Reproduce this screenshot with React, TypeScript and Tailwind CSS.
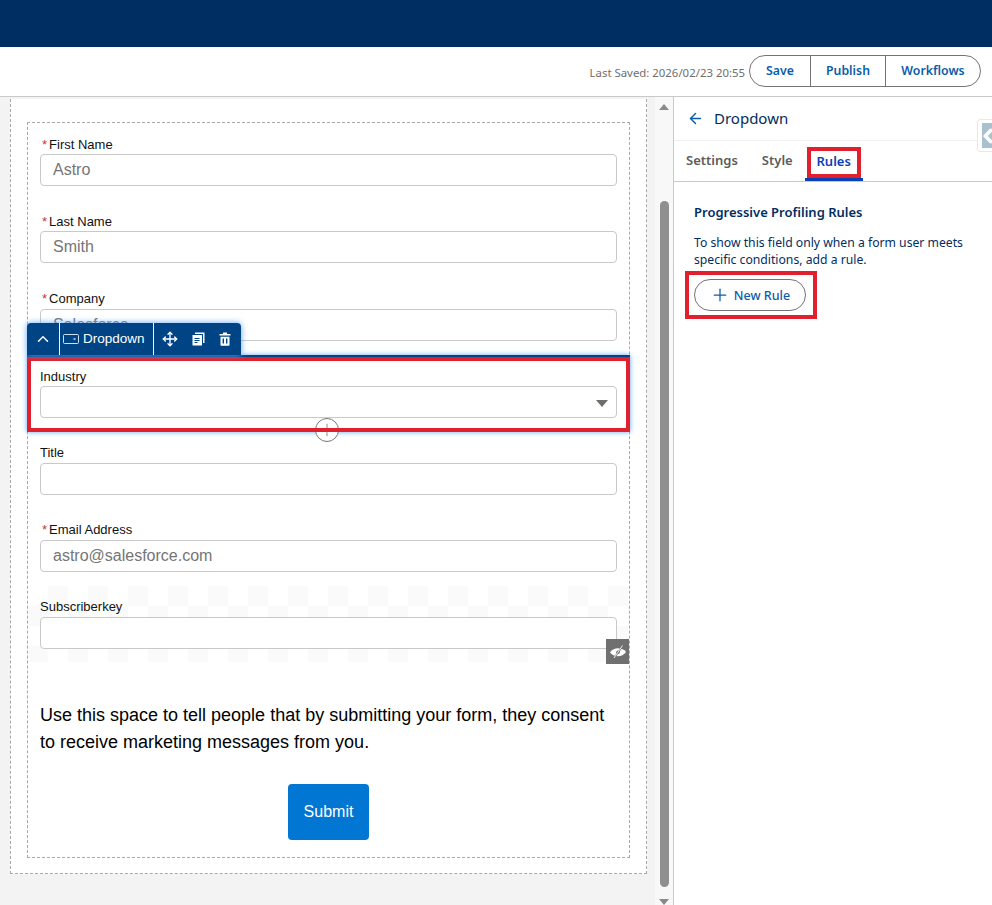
import { ArrowLeft, ChevronLeft, ChevronUp, Move, Plus } from "lucide-react"

const FORM_FONT = "font-['Liberation_Sans',Arial,sans-serif]"

function Field({ label, value, required }: { label: string; value?: string; required?: boolean }) {
  return (
    <div className="h-[77.17px] px-[12px]">
      <div className="flex h-[20px] items-center text-[13px] text-[#111]">
        {required && <span className="ml-[2px] mr-[2px] text-[#c23934]">*</span>}
        {label}
      </div>
      <div className="flex h-[32px] items-center rounded-[4px] border border-[#c9c9c9] bg-white pl-[12px] text-[16px] text-[#757575]">
        {value}
      </div>
    </div>
  )
}

function CopyIcon() {
  return (
    <svg width="13" height="14" viewBox="0 0 13 14">
      <path d="M3 2V0.5h9.5V11H11V2z" fill="white" />
      <path d="M0.5 3H10v10.5H0.5z" fill="white" />
      <path d="M2.5 6.5h5M2.5 8.5h5M2.5 10.5h3" stroke="#014486" strokeWidth="1" />
    </svg>
  )
}

function TrashIcon() {
  return (
    <svg width="12" height="14" viewBox="0 0 12 14">
      <path d="M4 2V0.5h4V2h3.5v1.6H0.5V2z" fill="white" />
      <path d="M1.5 4.8h9V13a.8.8 0 0 1-.8.8H2.3a.8.8 0 0 1-.8-.8z" fill="white" />
      <path d="M4.3 6.5v5M7.700 6.5v5" stroke="#014486" strokeWidth="1.4" />
    </svg>
  )
}

function HiddenEyeIcon() {
  return (
    <svg width="18" height="16" viewBox="0 0 18 16">
      <path d="M1 8.500C4.500 3 13.500 3 17 8c-3.500 5.500-12.500 5.500-16 .5z" fill="white" />
      <circle cx="9" cy="8.200" r="1.800" fill="#707070" />
      <path d="M13.500 2 4.500 15" stroke="#707070" strokeWidth="1.800" />
      <path d="M13.500 1.500 5 14" stroke="white" strokeWidth="0.900" />
    </svg>
  )
}

function FormCanvas() {
  return (
    <div className="flex min-w-0 flex-1 flex-col items-stretch pl-[10px] pt-[2px]">
      <div className="h-[775px] w-[637px] border-x border-b border-dashed border-[#a8a8a8] bg-white px-[16px] pt-[23px]">
        <div className={`h-[736px] border border-dashed border-[#a8a8a8] pt-[11.25px] ${FORM_FONT}`}>
          <Field label="First Name" value="Astro" required />
          <Field label="Last Name" value="Smith" required />
          <Field label="Company" value="Salesforce" required />

          {/* selected field, toolbar and frame sit on top of its neighbours */}
          <div className="relative h-[77.17px] px-[12px]">
            <div className="absolute -top-[43px] -left-px z-20 flex h-[32px] w-[214px] items-center rounded-t-[4px] bg-[#014486] text-white shadow-[0_0_6px_#60a5fa]">
              <div className="flex h-full w-[33px] items-center justify-center border-r border-white">
                <ChevronUp size={18} strokeWidth={2} />
              </div>
              <div className="flex h-full w-[94px] items-center gap-[4px] border-r border-white pl-[3px] pt-[1px] text-[13.5px]">
                <svg width="16" height="12" viewBox="0 0 16 12" fill="none" stroke="#cfe0f2" strokeWidth="1">
                  <rect x="0.5" y="1.5" width="15" height="9" rx="1" />
                  <path d="M10.500 6h2" strokeWidth="1.5" />
                </svg>
                Dropdown
              </div>
              <div className="ml-[8px] flex items-center gap-[14px]">
                <Move size={16} strokeWidth={2} />
                <CopyIcon />
                <TrashIcon />
              </div>
            </div>
            <div className="absolute -top-[11px] -left-px z-10 h-[77px] w-[603px] border-t-2 border-[#014486] shadow-[0_0_5px_#60a5fa]" />
            <div className="flex h-[20px] items-center pt-[2px] text-[13px] text-[#111]">Industry</div>
            <div className="relative flex h-[32px] items-center rounded-[4px] border border-[#c9c9c9] bg-white">
              <div className="absolute right-[8px] top-[13px] h-0 w-0 border-x-[6px] border-t-[7px] border-x-transparent border-t-[#706e6b]" />
            </div>
            <div className="absolute left-[287px] top-[52px] z-10 flex h-[24px] w-[24px] items-center justify-center rounded-full border border-[#777] bg-white text-[#777]">
              <Plus size={20} strokeWidth={1} />
            </div>
            <div className="absolute -top-[9px] -left-px z-10 h-[75px] w-[603px] border-4 border-[#e0202c]" />
          </div>

          <Field label="Title" />
          <Field label="Email Address" value="astro@salesforce.com" required />

          {/* hidden field: checker backdrop and eye badge */}
          <div className="relative h-[77.17px] px-[12px]">
            <div className="absolute -top-[11px] left-0 h-[76px] w-[601px] bg-[conic-gradient(#fafafa_25%,#ffffff_0_50%,#fafafa_0_75%,#ffffff_0)] bg-[length:40px_40px]" />
            <div className="relative flex h-[20px] items-center text-[13px] text-[#111]">Subscriberkey</div>
            <div className="relative h-[32px] rounded-[4px] border border-[#c9c9c9] bg-white" />
            <div className="absolute right-0 top-[42px] flex h-[25px] w-[23px] items-center justify-center bg-[#707070]">
              <HiddenEyeIcon />
            </div>
          </div>

          <p className="mt-[27.75px] px-[12px] text-[18px] leading-[27px] text-black">
            Use this space to tell people that by submitting your form, they consent to receive marketing messages from you.
          </p>
          <div className="mt-[28px] flex justify-center">
            <button className="h-[56px] w-[81px] rounded-[4px] bg-[#0176d3] text-[16px] text-white">Submit</button>
          </div>
        </div>
      </div>
    </div>
  )
}

function Scrollbar() {
  return (
    <div className="flex w-[18px] flex-col items-center bg-[#f8f8f8] pt-[7px]">
      <div className="h-0 w-0 border-x-[5px] border-b-[6px] border-x-transparent border-b-[#8a8a8a]" />
      <div className="mt-[91px] h-[686px] w-[9px] rounded-full bg-[#8f8f8f]" />
      <div className="mt-[12px] h-0 w-0 border-x-[5px] border-t-[6px] border-x-transparent border-t-[#8a8a8a]" />
    </div>
  )
}

function SidePanel() {
  return (
    <aside className="relative flex-1 border-l border-[#c9c9c9] bg-white text-[#032d60]">
      <div className="flex h-[44px] items-center gap-[10px] border-b border-[#f0f0f0] pl-[13px] text-[15px]">
        <ArrowLeft size={17} className="text-[#0b5cab]" strokeWidth={2} />
        Dropdown
      </div>
      <div className="absolute right-0 top-[22px] flex h-[33px] w-[15px] items-center rounded-l-[4px] border border-r-0 border-[#e8e8e8] bg-white pl-[4px]">
        <div className="flex h-[25px] w-[11px] items-center overflow-hidden bg-[#a9c0cf] text-white">
          <ChevronLeft size={22} strokeWidth={4} className="-ml-[5px] shrink-0" />
        </div>
      </div>
      <div className="flex h-[41px] items-stretch border-b border-[#c9c9c9] pl-[12px] text-[13px] font-semibold text-[#5c5c5c]">
        <span className="mr-[24px] flex items-center">Settings</span>
        <span className="mr-[12px] flex items-center">Style</span>
        <span className="relative flex w-[58px] items-center justify-center border-b-[3px] border-[#0b3fb8] pt-[5px] text-[#0b3fb8]">
          Rules
          <span className="absolute left-[2px] top-[6px] h-[31px] w-[54px] border-4 border-[#e0202c]" />
        </span>
      </div>
      <div className="px-[20px] pt-[21px]">
        <h2 className="text-[13px] font-semibold leading-[18px]">Progressive Profiling Rules</h2>
        <p className="mt-[13px] text-[12.2px] leading-[17px]">
          To show this field only when a form user meets specific conditions, add a rule.
        </p>
        <div className="relative mt-[11px]">
          <button className="flex h-[32px] w-[112px] items-center justify-center gap-[4px] rounded-full border border-[#747474] pt-[2px] text-[12.5px] font-medium text-[#0b5cab]">
            <Plus size={20} strokeWidth={1.5} className="-mt-[2px]" />
            New Rule
          </button>
          <span className="absolute -left-[9px] -top-[8px] h-[48px] w-[132px] border-4 border-[#e0202c]" />
        </div>
      </div>
    </aside>
  )
}

export default function App() {
  return (
    <div className="flex h-[905px] w-[992px] flex-col overflow-hidden bg-white font-['Noto_Sans',sans-serif]">
      <header className="h-[47px] bg-[#002d62]" />
      <div className="flex h-[50px] items-start justify-end border-b border-[#c9c9c9] pr-[11px] pt-[8px]">
        <span className="mr-[4px] mt-[10px] text-[11.4px] leading-[15px] text-[#706e6b]">Last Saved: 2026/02/23 20:55</span>
        <div className="flex h-[32px] rounded-full border border-[#747474] text-[12.3px] font-semibold text-[#0b5cab]">
          <button className="w-[60px]">Save</button>
          <button className="w-[76px] border-x border-[#747474]">Publish</button>
          <button className="w-[94px]">Workflows</button>
        </div>
      </div>
      <main className="flex flex-1">
        <div className="flex w-[673px] bg-[#f3f3f3]">
          <FormCanvas />
          <Scrollbar />
        </div>
        <SidePanel />
      </main>
    </div>
  )
}
